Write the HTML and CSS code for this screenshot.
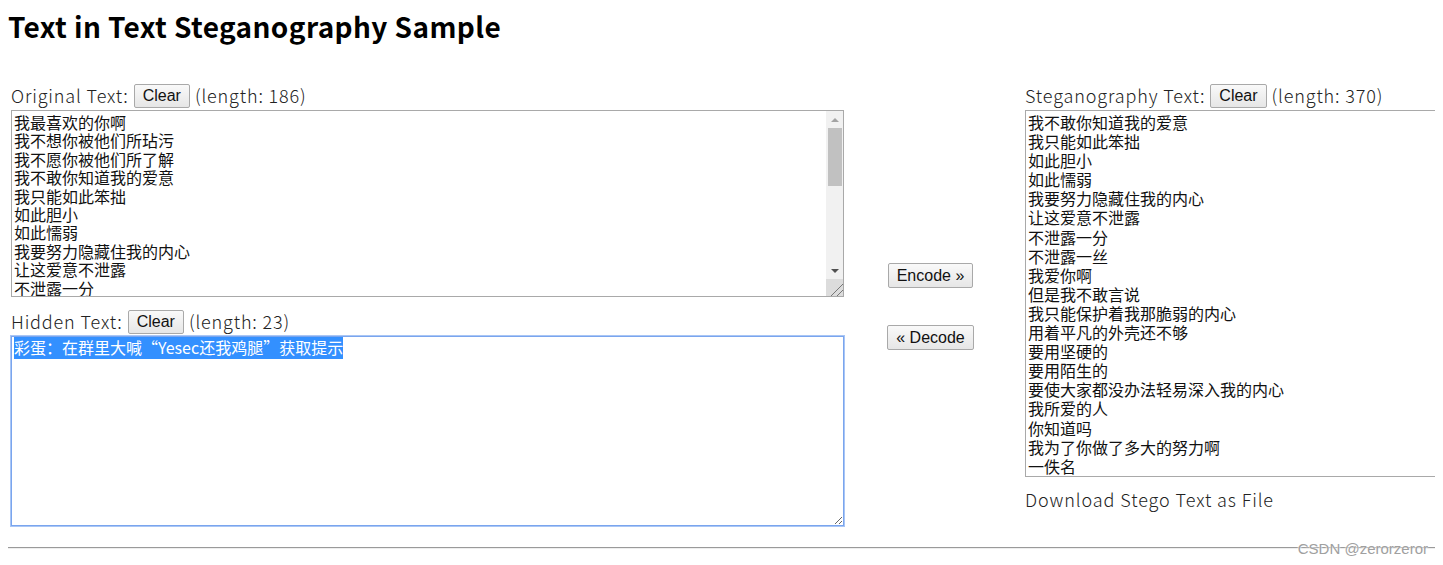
FILE: index.html
```html
<!DOCTYPE html>
<html lang="zh-CN">
<head>
    <meta charset="UTF-8">
    <title>Text in Text Steganography Sample</title>
    <link rel="stylesheet" href="styles.css">
</head>
<body>
    <h1 class="title">Text in Text Steganography Sample</h1>

    <div class="workspace">
        <div class="column">
            <div class="field-head">
                <span>Original Text:</span>
                <button class="btn" onclick="clearBox('originalText')">Clear</button>
                <span>(length: 186)</span>
            </div>
            <div class="scroll-wrap">
                <textarea id="originalText" class="box box-original" spellcheck="false">我最喜欢的你啊
我不想你被他们所玷污
我不愿你被他们所了解
我不敢你知道我的爱意
我只能如此笨拙
如此胆小
如此懦弱
我要努力隐藏住我的内心
让这爱意不泄露
不泄露一分
不泄露一丝
我爱你啊
但是我不敢言说
我只能保护着我那脆弱的内心
用着平凡的外壳还不够
要用坚硬的
要用陌生的
要使大家都没办法轻易深入我的内心
我所爱的人
你知道吗
我为了你做了多大的努力啊
一佚名</textarea>
                <div class="scrollbar">
                    <span class="arrow arrow-up"></span>
                    <span class="thumb"></span>
                    <span class="arrow arrow-down"></span>
                </div>
                <span class="grip"></span>
            </div>

            <div class="field-head field-head-hidden">
                <span>Hidden Text:</span>
                <button class="btn" onclick="clearBox('hiddenText')">Clear</button>
                <span>(length: 23)</span>
            </div>
            <textarea id="hiddenText" class="box box-hidden" spellcheck="false">彩蛋：在群里大喊“Yesec还我鸡腿”获取提示</textarea>
        </div>

        <div class="actions">
            <button class="btn btn-encode">Encode »</button>
            <button class="btn btn-decode">« Decode</button>
        </div>

        <div class="column">
            <div class="field-head">
                <span>Steganography Text:</span>
                <button class="btn" onclick="clearBox('stegoText')">Clear</button>
                <span>(length: 370)</span>
            </div>
            <textarea id="stegoText" class="box box-stego" spellcheck="false">我不敢你知道我的爱意
我只能如此笨拙
如此胆小
如此懦弱
我要努力隐藏住我的内心
让这爱意不泄露
不泄露一分
不泄露一丝
我爱你啊
但是我不敢言说
我只能保护着我那脆弱的内心
用着平凡的外壳还不够
要用坚硬的
要用陌生的
要使大家都没办法轻易深入我的内心
我所爱的人
你知道吗
我为了你做了多大的努力啊
一佚名</textarea>
            <a class="download">Download Stego Text as File</a>
        </div>
    </div>

    <hr class="rule">
    <div class="watermark">CSDN @zerorzeror</div>

    <script>
        function clearBox(id) {
            document.getElementById(id).value = "";
        }

        let hidden = document.getElementById("hiddenText");
        hidden.focus();
        hidden.setSelectionRange(0, hidden.value.length);
    </script>
</body>
</html>
```

FILE: styles.css
```css
html {
    overflow: hidden;
}
body {
    margin: 8px;
    font-family: "Noto Sans CJK JP", "Noto Sans", sans-serif;
    color: #333;
    background: white;
}
.title {
    margin: 0;
    font-size: 28px;
    line-height: 36px;
    font-weight: bold;
    letter-spacing: 0.4px;
    color: #000;
}
.workspace {
    display: grid;
    grid-template-columns: 833px 181px 833px;
    margin-top: 40px;
    padding-left: 3px;
}
.column {
    display: flex;
    flex-direction: column;
    align-items: flex-start;
}
.field-head {
    display: flex;
    align-items: center;
    gap: 5px;
    height: 24px;
    margin-bottom: 2px;
    font-size: 18px;
    font-weight: 300;
    letter-spacing: 0.85px;
    color: #222;
    white-space: nowrap;
}
.field-head span {
    padding-bottom: 3px;
}
.field-head-hidden {
    margin-top: 13px;
}
.btn {
    height: 24px;
    padding: 0 8px;
    font-family: "Liberation Sans", Arial, sans-serif;
    font-size: 16px;
    letter-spacing: 0;
    color: #111;
    background: linear-gradient(#f9f9f9, #e6e6e6);
    border: 1px solid #a9a9a9;
    border-radius: 2px;
    cursor: pointer;
}
.box {
    box-sizing: border-box;
    width: 833px;
    padding: 2px;
    font-family: "Noto Sans CJK SC", sans-serif;
    font-size: 16px;
    color: #111;
    border: 1px solid #a9a9a9;
    resize: both;
}
.box:focus {
    outline: none;
    border-color: #7aa5ee;
    box-shadow: 0 0 0 1px #a9c6f5;
}
.box::selection {
    background: #3390ff;
    color: white;
}

/* original text box with its scrollbar drawn on top */
.scroll-wrap {
    position: relative;
}
.box-original {
    display: block;
    height: 187px;
    padding-right: 19px;
    line-height: 18.4px;
    overflow: hidden;
    resize: none;
}
.scrollbar {
    position: absolute;
    top: 1px;
    right: 1px;
    bottom: 18px;
    width: 17px;
    display: flex;
    flex-direction: column;
    background: #f1f1f1;
}
.arrow {
    height: 17px;
    display: flex;
    align-items: center;
    justify-content: center;
}
.arrow::before {
    content: "";
    border-left: 4px solid transparent;
    border-right: 4px solid transparent;
}
.arrow-up::before {
    border-bottom: 4px solid #a3a3a3;
}
.arrow-down {
    margin-top: auto;
}
.arrow-down::before {
    border-top: 4px solid #505050;
}
.thumb {
    height: 58px;
    margin: 0 1px 0 2px;
    background: #c1c1c1;
}
.grip {
    position: absolute;
    right: 1px;
    bottom: 1px;
    width: 17px;
    height: 17px;
    background:
        linear-gradient(135deg, transparent 62%, #777 62% 67%, transparent 67% 80%, #777 80% 85%, transparent 85%),
        #dcdcdc;
}

.box-hidden {
    height: 190px;
    line-height: 17px;
}
.box-stego {
    height: 367px;
    line-height: 19.1px;
    overflow: hidden;
}
.actions {
    display: flex;
    flex-direction: column;
    align-items: center;
    gap: 37px;
    padding-top: 179px;
    padding-right: 8px;
}
.btn-encode,
.btn-decode {
    height: 25px;
}
.download {
    margin-top: 10px;
    font-size: 18px;
    font-weight: 300;
    letter-spacing: 0.9px;
    line-height: 24px;
    color: #222;
    cursor: pointer;
}
.rule {
    margin: 21px -8px 0 0;
    border: 0;
    border-top: 1px solid #9a9a9a;
    border-bottom: 1px solid #eeeeee;
}
.watermark {
    position: absolute;
    right: 15px;
    top: 540px;
    font-family: "Liberation Sans", Arial, sans-serif;
    font-size: 15px;
    color: #a0a0a0;
    text-shadow: 0 0 2px white, 0 0 2px white;
}
```
